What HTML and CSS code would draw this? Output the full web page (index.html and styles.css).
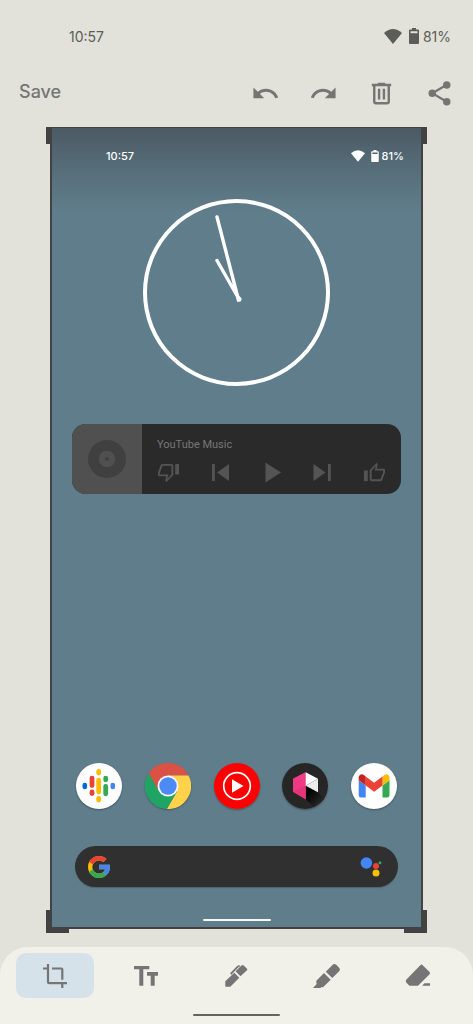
FILE: index.html
```html
<!DOCTYPE html>
<html lang="en">
<head>
<meta charset="utf-8">
<meta name="viewport" content="width=device-width, initial-scale=1">
<title>Edit screenshot</title>
<link rel="stylesheet" href="styles.css">
</head>
<body>
<svg class="defs" aria-hidden="true">
  <symbol id="wifi" viewBox="0 0 18 15"><path d="M0 4Q9-4 18 4L9 15z"/></symbol>
  <symbol id="battery" viewBox="0 0 10 16"><path fill-rule="evenodd" d="M3 0h4v1.500h2q1 0 1 1V15q0 1-1 1H1q-1 0-1-1V2.500q0-1 1-1h2zM1.500 3.300v2h7v-2z"/></symbol>
  <symbol id="thumb" viewBox="0 0 24 24"><path fill-rule="evenodd" d="M1 10h4v11H1zM14.200 2 15.300 3.100 14.500 8H22q1 0 1 2v2l-3 8q-.5 1-2 1H9q-2 0-2-2V9.500zM9 10.300V19h9.200L21 11.700V10h-8.800l1-4.700z"/></symbol>
</svg>
<div class="editor">
  <div class="status">
    <span>10:57</span>
    <span class="status-right">
      <svg class="wifi"><use href="#wifi"/></svg>
      <svg class="battery"><use href="#battery"/></svg>
      <span>81%</span>
    </span>
  </div>
  <header class="toolbar">
    <button class="save">Save</button>
    <div class="actions">
      <button aria-label="Undo"><svg viewBox="0 0 24 24"><path d="M12.500 8c-2.650 0-5.050.99-6.900 2.600L2 7v9h9l-3.620-3.620c1.390-1.160 3.160-1.880 5.120-1.880 3.540 0 6.550 2.310 7.600 5.500l2.370-.78C21.080 11.030 17.150 8 12.500 8z"/></svg></button>
      <button aria-label="Redo"><svg viewBox="0 0 24 24"><path d="M18.400 10.600C16.550 8.990 14.150 8 11.500 8c-4.650 0-8.580 3.030-9.960 7.220L3.900 16c1.050-3.190 4.050-5.500 7.600-5.500 1.950 0 3.730.72 5.120 1.880L13 16h9V7z"/></svg></button>
      <button aria-label="Delete"><svg viewBox="0 0 24 24"><path fill-rule="evenodd" d="M9 3h6v1h5v2h-1v13q0 2-2 2H7q-2 0-2-2V6H4V4h5zM7 6v13h10V6zM9 8h2v9H9zM13 8h2v9h-2z"/></svg></button>
      <button aria-label="Share"><svg viewBox="0 0 24 24"><g transform="translate(0 -.2)"><path d="M18 5 6 12l12 7" fill="none" stroke="currentColor" stroke-width="1.800"/><circle cx="18" cy="5.200" r="3.100"/><circle cx="6" cy="12" r="3.100"/><circle cx="18" cy="19" r="3.100"/></g></svg></button>
    </div>
  </header>

  <main class="preview">
    <span class="handle tl"></span><span class="handle tr"></span>
    <span class="handle bl"></span><span class="handle br"></span>
    <div class="status small">
      <span>10:57</span>
      <span class="status-right">
        <svg class="wifi"><use href="#wifi"/></svg>
        <svg class="battery"><use href="#battery"/></svg>
        <span>81%</span>
      </span>
    </div>
    <svg class="clock" viewBox="0 0 188 188" role="img" aria-label="Clock showing 10:57">
      <circle cx="93.500" cy="93.500" r="91.500" fill="none" stroke="#fff" stroke-width="4"/>
      <path d="M74 18 95.500 101M74 61.500 96.500 101" fill="none" stroke="#fff" stroke-width="3.400" stroke-linecap="round"/>
      <path d="M93 93 99 100 94 103z" fill="#fff"/>
    </svg>
    <section class="player">
      <div class="art">
        <svg viewBox="0 0 38 38"><circle cx="19" cy="19" r="19" fill="#404040"/><circle cx="19" cy="19" r="8.300" fill="#505050"/><circle cx="19" cy="19" r="2" fill="#404040"/></svg>
      </div>
      <div class="player-body">
        <div class="player-title">YouTube Music</div>
        <div class="controls">
          <button aria-label="Dislike"><svg class="flip" viewBox="0 0 24 24"><use href="#thumb"/></svg></button>
          <button aria-label="Previous"><svg viewBox="0 0 24 24"><path d="M4 4h2.800v17H4zM21 4v17L9 12.500z"/></svg></button>
          <button aria-label="Play"><svg viewBox="0 0 24 24"><path d="M5.500 2.500v20L21 12.500z"/></svg></button>
          <button aria-label="Next"><svg viewBox="0 0 24 24"><path d="M2.500 4v17l12-8.500zM17 4h2.800v17H17z"/></svg></button>
          <button aria-label="Like"><svg viewBox="0 0 24 24"><use href="#thumb"/></svg></button>
        </div>
      </div>
    </section>
    <nav class="dock">
      <a href="#podcasts" aria-label="Podcasts"><svg viewBox="0 0 46 46"><circle cx="23" cy="23" r="23" fill="#fff"/>
        <g fill="#ea4335"><rect x="13.600" y="12.700" width="4.800" height="12.300" rx="2.400"/><rect x="13.600" y="26.500" width="4.800" height="6.500" rx="2.400"/></g>
        <g fill="#fbbc04"><rect x="20.300" y="6" width="4.800" height="6.500" rx="2.400"/><rect x="20.300" y="14.700" width="4.800" height="16.600" rx="2.400"/><rect x="20.300" y="33" width="4.800" height="6.500" rx="2.400"/></g>
        <g fill="#34a853"><rect x="27.300" y="12.700" width="4.800" height="6.500" rx="2.400"/><rect x="27.300" y="21" width="4.800" height="12.200" rx="2.400"/></g>
        <rect x="6.500" y="19.700" width="4.600" height="6.600" rx="2.300" fill="#0066da"/><rect x="34.500" y="19.700" width="4.600" height="6.600" rx="2.300" fill="#4285f4"/></svg></a>
      <a href="#chrome" aria-label="Chrome"><svg viewBox="0 0 46 46">
        <path fill="#db5145" d="M3.650 10.500A23 23 0 0 1 43.500 12.500H23L13.900 28.250z"/>
        <path fill="#ffd24a" d="M43.500 12.500A23 23 0 0 1 21.850 46L32.100 28.250 23 12.500z"/>
        <path fill="#1fa463" d="M21.850 46A23 23 0 0 1 3.650 10.500L13.900 28.250H32.100z"/>
        <circle cx="23" cy="23" r="10.500" fill="#f3f5f7"/><circle cx="23" cy="23" r="8.700" fill="#4c8bf5"/></svg></a>
      <a href="#music" aria-label="YouTube Music"><svg viewBox="0 0 46 46"><circle cx="23" cy="23" r="23" fill="#f00"/><circle cx="23" cy="23" r="13.300" fill="none" stroke="#fff" stroke-width="1.700"/><path fill="#fff" d="M18 16.300v13.400L29.500 23z"/></svg></a>
      <a href="#wallpapers" aria-label="Wallpapers"><svg viewBox="0 0 46 46">
        <defs><linearGradient id="shade" x1="0" y1="0" x2="1" y2="1"><stop offset=".2" stop-color="#000"/><stop offset=".8" stop-color="#262626"/></linearGradient></defs>
        <circle cx="23" cy="23" r="23" fill="#262626"/><path fill="url(#shade)" d="M23.700 22.700 36 29.300 42 36 32 44 23.700 36.300z"/>
        <path fill="#ed3a82" d="M23.700 9.300 11 15.700v13l12.700 7.600z"/><path fill="#f03c86" d="M23.700 9.300 11 15.700l12.700 7z"/><path fill="#e6347a" d="M11 28.700l12.700-6v13.600z"/>
        <path fill="#fff" d="M23.700 9.300 36 15.700l-12.300 7z"/><path fill="#ececec" d="M36 15.700v13.600l-12.300-6.600z"/></svg></a>
      <a href="#gmail" aria-label="Gmail"><svg viewBox="0 0 46 46"><circle cx="23" cy="23" r="23" fill="#fff"/>
        <g transform="translate(7.700 11.300) scale(.35) translate(-52 -42)"><path fill="#4285f4" d="M58 108h14V74L52 59v43c0 3.320 2.690 6 6 6"/><path fill="#34a853" d="M120 108h14c3.320 0 6-2.690 6-6V59l-20 15"/><path fill="#fbbc04" d="M120 48v26l20-15v-8c0-7.420-8.470-11.650-14.400-7.200"/><path fill="#ea4335" d="M72 74V48l24 18 24-18v26L96 92"/><path fill="#c5221f" d="M52 51v8l20 15V48l-5.600-4.200c-5.940-4.450-14.400-.22-14.400 7.200"/></g></svg></a>
    </nav>
    <div class="search">
      <svg class="g-logo" viewBox="4 4 40 40"><path fill="#fbbc05" d="M43.600 20.100H42V20H24v8h11.300C33.700 32.700 29.200 36 24 36c-6.600 0-12-5.400-12-12s5.400-12 12-12c3.100 0 5.800 1.200 8 3l5.700-5.700C34 6.100 29.300 4 24 4 13 4 4 13 4 24s9 20 20 20 20-9 20-20c0-1.300-.1-2.700-.4-3.900z"/><path fill="#ea4335" d="m6.300 14.700 6.600 4.800C14.700 15.100 19 12 24 12c3.100 0 5.800 1.200 8 3l5.700-5.700C34 6.100 29.300 4 24 4 16.300 4 9.700 8.300 6.300 14.700z"/><path fill="#34a853" d="M24 44c5.200 0 9.900-2 13.400-5.200l-6.200-5.200C29.200 35.100 26.700 36 24 36c-5.200 0-9.600-3.300-11.300-7.900l-6.500 5C9.500 39.600 16.200 44 24 44z"/><path fill="#4285f4" d="M43.600 20.100H42V20H24v8h11.300c-.8 2.200-2.200 4.200-4.100 5.600l6.200 5.200C37 39.200 44 34 44 24c0-1.300-.1-2.700-.4-3.900z"/></svg>
      <input type="text" aria-label="Search">
      <button aria-label="Assistant"><svg viewBox="0 0 24 24"><circle cx="6.400" cy="8" r="5.800" fill="#4285f4"/><circle cx="16" cy="11" r="3" fill="#ea4335"/><circle cx="20" cy="7.800" r="1.500" fill="#34a853"/><circle cx="16" cy="18" r="3.500" fill="#fbbc04"/></svg></button>
    </div>
    <div class="home-line light"></div>
  </main>

  <footer class="tools">
    <div class="tool-row">
      <button class="active" aria-label="Crop"><svg viewBox="0 0 30 30"><path fill="none" stroke="#757575" stroke-width="2.200" d="M8 3V21a1.200 1.200 0 0 0 1.200 1.200H27M3 7.500H8M12 7.500H21.300a1 1 0 0 1 1 1V18.700M22.300 22V27"/></svg></button>
      <button aria-label="Text"><svg viewBox="0 0 30 30"><path d="M3 5h15.300v3.300h-6v16.400h-4V8.300H3zM16 11h11v3.700h-3.300v10h-4v-10H16z"/></svg></button>
      <button aria-label="Pen"><svg viewBox="1 0 30 30"><path d="M4.300 25.700V20.300L13.300 11.700 18.300 16.700 9.300 25.700zM14.500 10.300 20.500 4.400Q21.700 3.400 22.700 4.500L26 7.700Q26.700 8.500 26 9.300L19.500 15.300z"/><path d="M9.700 13 17 5.500Q17.800 4.600 18.700 5.500" fill="none" stroke="#757575" stroke-width="1.800"/></svg></button>
      <button aria-label="Highlighter"><svg viewBox="1 0 30 30"><path d="M2 27 5.700 23Q4.700 21 5.600 19.600L13 12 19.700 18.700 12 26.200 10.500 26 9.500 27zM14.700 10.700 22 3.600Q23.500 2.500 25 3.600L28.400 7Q29.400 8.500 28.400 10L21.300 17z"/></svg></button>
      <button aria-label="Eraser"><svg viewBox="0 0 30 30"><path d="M17.300 4.200Q18.500 3 19.700 4.200L26.600 11Q27.500 12 26.600 13.200L15 24.700H6.500L3.200 21.400Q2.200 20 3.200 18.800zM21.500 22.300H27v2.400h-7.900z"/></svg></button>
    </div>
    <div class="home-line"></div>
  </footer>
</div>
</body>
</html>
```
FILE: styles.css
```css
* { box-sizing: border-box; }
body { margin: 0; background: #e2e2da; font-family: Inter, "Open Sans", sans-serif; }
button { border: 0; padding: 0; margin: 0; background: none; color: inherit; font: inherit; display: flex; align-items: center; justify-content: center; }
svg { display: block; fill: currentColor; }
.defs { position: absolute; width: 0; height: 0; }

.editor { min-height: 100vh; display: flex; flex-direction: column; color: #757575; }

.status { display: flex; justify-content: space-between; align-items: center; height: 72px; padding: 0 22px 0 69px; font-size: 14px; color: #5c5c58; }
.status-right { display: flex; align-items: center; }
.wifi { width: 18px; height: 15px; margin-right: 7px; }
.battery { width: 10px; height: 16px; margin-right: 4px; }

.toolbar { display: flex; justify-content: space-between; align-items: center; height: 42px; padding: 0 19px; margin-bottom: 13px; }
.save { font-size: 18px; line-height: 24px; padding-bottom: 2px; font-weight: 500; }
.actions { display: flex; gap: 29px; }
.actions svg { width: 29px; height: 29px; }

.preview { position: relative; flex: 1; display: flex; flex-direction: column; margin: 0 50px 18px; border: 2px solid #424242; border-top-width: 1px; background: linear-gradient(#4b5963, #566d79 40px, #607d8b 84px); }
.handle { position: absolute; width: 6px; height: 17px; background: #424242; }
.tl { left: -6px; top: -1px; }
.tr { right: -6px; top: -1px; }
.bl, .br { width: 23px; height: 23px; bottom: -6px; background: none; border: 0 solid #424242; border-bottom-width: 6px; }
.bl { left: -6px; border-left-width: 6px; }
.br { right: -6px; border-right-width: 6px; }

.small { height: 56px; padding: 0 17px 0 54px; font-size: 11px; font-weight: 500; color: #fff; }
.small .wifi { width: 14px; height: 12px; margin-right: 6px; }
.small .battery { width: 8px; height: 12px; margin-right: 3px; }

.clock { width: 188px; height: 188px; margin: 15px auto 37px; }

.player { display: flex; height: 70px; margin: 0 20px auto; border-radius: 14px; overflow: hidden; background: #2a2a2a; color: #545454; }
.art { width: 70px; display: flex; align-items: center; justify-content: center; background: #505050; }
.art svg { width: 38px; height: 38px; }
.player-body { flex: 1; padding: 13px 15px 0; }
.player-title { font: 11px/16px Roboto, sans-serif; color: #777; }
.controls { display: flex; justify-content: space-between; margin-top: 7px; }
.controls svg { width: 24px; height: 24px; }
.controls button:first-child svg, .controls button:last-child svg { width: 23px; height: 23px; }
.flip { transform: rotate(180deg); }

.dock { display: flex; justify-content: space-between; margin: 24px 24px 37px; }
.dock a { display: block; border-radius: 50%; box-shadow: 0 1px 2px #0005; }
.dock svg { width: 46px; height: 46px; }

.search { display: flex; align-items: center; height: 41px; margin: 0 23px; padding: 0 14px 0 13px; border-radius: 21px; background: #303030; box-shadow: 0 1px 1px #0003; }
.search input { flex: 1; min-width: 0; border: 0; outline: 0; background: none; color: #fff; }
.g-logo { width: 22px; height: 22px; }
.search button svg { width: 24px; height: 24px; }

.home-line { width: 87px; height: 2px; margin: 0 auto; border-radius: 1px; background: #65645f; }
.light { width: 68px; margin: 32px auto 6px; background: #f6f8fa; }

.tools { padding: 6px 16px 8px; border-radius: 28px 28px 0 0; background: #f1f0e9; }
.tool-row { display: flex; justify-content: space-between; margin-bottom: 16px; }
.tool-row button { width: 78px; height: 45px; border-radius: 10px; }
.tool-row .active { background: #d5e2ea; }
.tool-row svg { width: 30px; height: 30px; }
```
